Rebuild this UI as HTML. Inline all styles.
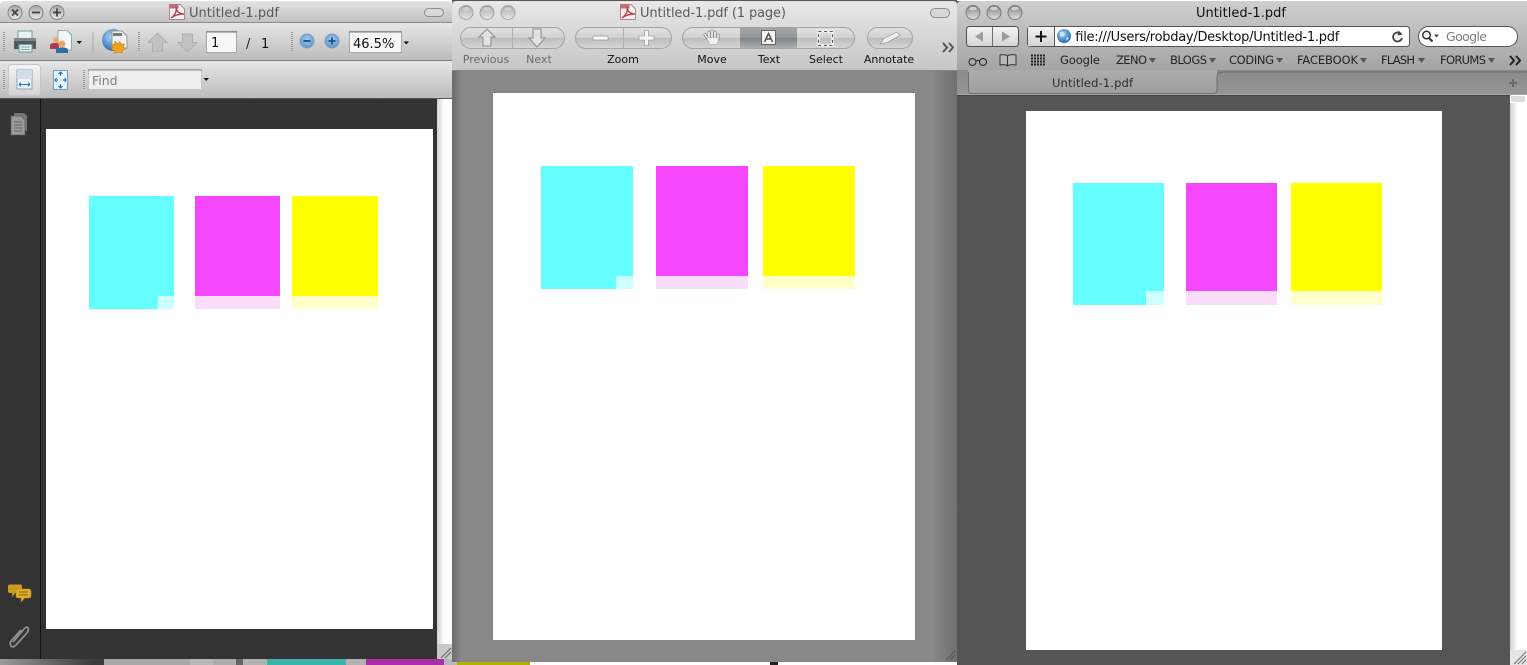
<!DOCTYPE html>
<html><head><meta charset="utf-8"><title>Untitled-1.pdf</title>
<style>
html,body{margin:0;padding:0;background:#fff;width:1527px;height:665px;overflow:hidden}
svg{display:block;position:absolute;left:0;top:0}
text{font-family:"DejaVu Sans","Liberation Sans",sans-serif;dominant-baseline:auto}
</style></head><body>
<svg width="1527" height="665" viewBox="0 0 1527 665" xmlns="http://www.w3.org/2000/svg">
<defs>
<linearGradient id="t1" x1="0" y1="0" x2="0" y2="1"><stop offset="0" stop-color="#e2e2e2"/><stop offset="1" stop-color="#c2c2c2"/></linearGradient>
<linearGradient id="tb1" x1="0" y1="0" x2="0" y2="1"><stop offset="0" stop-color="#e6e6e6"/><stop offset="1" stop-color="#bcbcbc"/></linearGradient>
<linearGradient id="t2" x1="0" y1="0" x2="0" y2="1"><stop offset="0" stop-color="#e8e8e8"/><stop offset="1" stop-color="#c6c6c6"/></linearGradient>
<linearGradient id="t3" x1="0" y1="0" x2="0" y2="1"><stop offset="0" stop-color="#cfcfcf"/><stop offset="1" stop-color="#a4a4a4"/></linearGradient>
<linearGradient id="tab" x1="0" y1="0" x2="0" y2="1"><stop offset="0" stop-color="#ababab"/><stop offset="1" stop-color="#a0a0a0"/></linearGradient>
<linearGradient id="tabbar" x1="0" y1="0" x2="0" y2="1"><stop offset="0" stop-color="#8a8a8a"/><stop offset="1" stop-color="#959595"/></linearGradient>
<linearGradient id="pill" x1="0" y1="0" x2="0" y2="1"><stop offset="0" stop-color="#e2e2e2"/><stop offset=".48" stop-color="#d2d2d2"/><stop offset=".5" stop-color="#bdbdbd"/><stop offset="1" stop-color="#d6d6d6"/></linearGradient>
<linearGradient id="sel" x1="0" y1="0" x2="0" y2="1"><stop offset="0" stop-color="#a2a6a9"/><stop offset=".48" stop-color="#94989c"/><stop offset=".5" stop-color="#7e8388"/><stop offset="1" stop-color="#aab0b4"/></linearGradient>
<linearGradient id="btn" x1="0" y1="0" x2="0" y2="1"><stop offset="0" stop-color="#f4f4f4"/><stop offset="1" stop-color="#d4d4d4"/></linearGradient>
<linearGradient id="sb" x1="0" y1="0" x2="1" y2="0"><stop offset="0" stop-color="#d0d0d0"/><stop offset=".45" stop-color="#fff"/><stop offset="1" stop-color="#fff"/></linearGradient>
<linearGradient id="side" gradientUnits="userSpaceOnUse" x1="452" y1="0" x2="957" y2="0"><stop offset="0" stop-color="#6a6a6a"/><stop offset=".018" stop-color="#888"/><stop offset=".95" stop-color="#888"/><stop offset="1" stop-color="#707070"/></linearGradient>
<linearGradient id="strip" x1="0" y1="0" x2="1" y2="0"><stop offset="0" stop-color="#9a9a9a"/><stop offset="1" stop-color="#3c3c3c"/></linearGradient>
<linearGradient id="l2" x1="0" y1="0" x2="0" y2="1"><stop offset="0" stop-color="#a8a8a8"/><stop offset="1" stop-color="#e8e8e8"/></linearGradient>
<linearGradient id="l3" x1="0" y1="0" x2="0" y2="1"><stop offset="0" stop-color="#7e8082"/><stop offset="1" stop-color="#e0e2e4"/></linearGradient>
<radialGradient id="globe" cx=".4" cy=".35" r=".7"><stop offset="0" stop-color="#a9d4f5"/><stop offset="1" stop-color="#1b62b0"/></radialGradient>
<radialGradient id="zb" cx=".5" cy=".4" r=".6"><stop offset="0" stop-color="#a8cdec"/><stop offset="1" stop-color="#5a94c8"/></radialGradient>
<g id="pdf"><path d="M.5.5H11L15.500 5V15.500H.5Z" fill="#f4f0f0" stroke="#a88"/><rect x=".5" y=".5" width="9" height="4" fill="#c46a72"/><path d="M2 14C6 11 8 7 7 3 7.500 8 11 10 15 10 10 10 6 11 2 14Z" fill="none" stroke="#b23a44" stroke-width="1.300"/></g>
<g id="p2"><circle r="7" fill="url(#l2)" stroke="#a2a2a2"/><ellipse cy="-3.500" rx="3.500" ry="1.800" fill="#dcdcdc" opacity=".7"/></g>
<g id="p3"><circle r="7" fill="url(#l3)" stroke="#7a7a7a"/><ellipse cy="-4" rx="3.800" ry="1.800" fill="#e4e4e4" opacity=".75"/></g>
<g id="dots"><path d="M0 0V20" stroke="#8a8a8a" stroke-width="1.500" stroke-dasharray="1 1"/></g>
</defs>

<!-- backdrop -->
<rect width="1527" height="665" fill="#fff"/>
<rect x="0" y="659" width="92" height="6" fill="url(#strip)"/>
<rect x="92" y="659" width="12" height="6" fill="#3a3a3a"/>
<rect x="104" y="659" width="86" height="6" fill="#a8a8a8"/>
<rect x="190" y="659" width="23" height="6" fill="#b8b8b8"/>
<rect x="213" y="659" width="23" height="6" fill="#adadad"/>
<rect x="236" y="659" width="7" height="6" fill="#666"/>
<rect x="243" y="659" width="24" height="6" fill="#b2b2b2"/>
<rect x="267" y="659" width="79" height="6" fill="#3fb3aa"/>
<rect x="346" y="659" width="20" height="6" fill="#b2b2b2"/>
<rect x="366" y="659" width="78" height="6" fill="#a92fa9"/>
<rect x="444" y="659" width="13" height="6" fill="#b8b8b8"/>
<rect x="457" y="662" width="73" height="3" fill="#b1b000"/>
<rect x="770" y="661" width="8" height="4" fill="#222"/>
<rect x="452" y="0" width="505" height="1" fill="#555"/>

<!-- WINDOW 2 -->
<rect x="452" y="1" width="505" height="661" fill="url(#side)"/>
<path d="M452 70V5Q452 1 457 1H952Q957 1 957 5V70Z" fill="url(#t2)"/>
<rect x="452" y="70" width="505" height="1" fill="#858585"/>
<use href="#p2" x="466" y="12.500"/><use href="#p2" x="487" y="12.500"/><use href="#p2" x="508" y="12.500"/>
<use href="#pdf" x="620" y="4"/>
<text x="640" y="17" font-size="13" fill="#5a5a5a" textLength="146">Untitled-1.pdf (1 page)</text>
<rect x="930.500" y="8.500" width="19" height="9" rx="4.500" fill="#d8d8d8" stroke="#8e8e8e"/>
<!-- pills -->
<rect x="460.500" y="27.500" width="104" height="21" rx="10.500" fill="url(#pill)" stroke="#a4a4a4"/>
<path d="M512.500 28V48" stroke="#aeaeae"/>
<path d="M487 29L495 37H491V46H483V37H479Z" fill="#e2e2e2" stroke="#8c8c8c"/>
<path d="M533 29H541V38H545L537 47 529 38H533Z" fill="#e2e2e2" stroke="#8c8c8c"/>
<rect x="575.500" y="27.500" width="96" height="21" rx="10.500" fill="url(#pill)" stroke="#a4a4a4"/>
<path d="M623.500 28V48" stroke="#aeaeae"/>
<rect x="593" y="36" width="15" height="4" fill="#f4f4f4" stroke="#888" stroke-width=".6"/>
<path d="M644.500 30.500H648.500V36H654V40H648.500V45.500H644.500V40H639V36H644.500Z" fill="#f6f6f6" stroke="#888" stroke-width=".6"/>
<rect x="682.500" y="27.500" width="172" height="21" rx="10.500" fill="url(#pill)" stroke="#a4a4a4"/>
<rect x="740" y="28" width="57" height="20" fill="url(#sel)"/>
<!-- hand -->
<path d="M707.500 38L705 34.500M709 38V32M712 38V31M715 38V32M718 39V35" stroke="#777" stroke-width="2.800" stroke-linecap="round" fill="none"/>
<path d="M707.500 38L705 34.500M709 38V32M712 38V31M715 38V32M718 39V35" stroke="#f6f6f6" stroke-width="1.700" stroke-linecap="round" fill="none"/>
<path d="M706.500 37.500H719L718 42 716 44.500H710Z" fill="#f2f2f2" stroke="#999" stroke-width=".5"/>
<rect x="761.500" y="30.500" width="14" height="14" fill="#f4f4f4" stroke="#666"/>
<path d="M764.500 42L768.500 33.500 772.500 42M766 39H771" fill="none" stroke="#555" stroke-width="1.500"/>
<rect x="818.500" y="31.500" width="14" height="14" fill="none" stroke="#fff" stroke-width="2"/>
<rect x="818.500" y="31.500" width="14" height="14" fill="none" stroke="#555" stroke-dasharray="3 2.600"/>
<rect x="867.500" y="27.500" width="45" height="21" rx="10.500" fill="url(#pill)" stroke="#a4a4a4"/>
<path d="M880 44L884 38.500 897 32 900 35.500 887 42.500Z" fill="#f0f0f0" stroke="#999" stroke-width=".7"/>
<path d="M943 43L947 47.500 943 52M949 43L953 47.500 949 52" fill="none" stroke="#555" stroke-width="2"/>
<g font-size="11" text-anchor="middle">
<text x="486" y="63" fill="#6a6a6a">Previous</text>
<text x="539" y="63" fill="#6a6a6a">Next</text>
<text x="623" y="63" fill="#111">Zoom</text>
<text x="712" y="63" fill="#111">Move</text>
<text x="769" y="63" fill="#111">Text</text>
<text x="826" y="63" fill="#111">Select</text>
<text x="889" y="63" fill="#111">Annotate</text>
</g>
<!-- page 2 -->
<rect x="493" y="93" width="422" height="547" fill="#fff"/>
<rect x="541" y="166" width="92" height="123" fill="#66ffff"/>
<rect x="616" y="276" width="17" height="13" fill="#ccffff"/>
<rect x="656" y="166" width="92" height="110" fill="#f547ff"/>
<rect x="656" y="276" width="92" height="13" fill="#fadcfb"/>
<rect x="763" y="166" width="92" height="110" fill="#ffff00"/>
<rect x="763" y="276" width="92" height="13" fill="#ffffcc"/>
<path d="M946 660L955 651M950 660L955 655" stroke="#555"/>

<!-- WINDOW 1 -->
<rect x="0" y="98" width="452" height="561" fill="#333"/>
<path d="M0 22V5Q0 1 5 1H447Q452 1 452 5V22Z" fill="url(#t1)"/>
<rect x="0" y="22" width="452" height="1" fill="#8a8a8a"/>
<rect x="0" y="23" width="452" height="37" fill="url(#tb1)"/>
<rect x="0" y="60" width="452" height="1" fill="#7c7c7c"/>
<rect x="0" y="61" width="452" height="37" fill="url(#tb1)"/>
<rect x="0" y="98" width="452" height="1" fill="#555"/>
<rect x="437" y="99" width="15" height="560" fill="url(#sb)"/>
<rect x="437" y="644" width="15" height="15" fill="#c8c8c8"/>
<path d="M441 658L451 648M445 658L451 652" stroke="#666"/>
<rect x="40" y="99" width="1" height="560" fill="#111"/>
<g>
<circle cx="15" cy="12.500" r="7" fill="url(#l2)" stroke="#808080"/><path d="M12 9.500L18 15.500M18 9.500L12 15.500" stroke="#444" stroke-width="1.800"/>
<circle cx="36" cy="12.500" r="7" fill="url(#l2)" stroke="#808080"/><path d="M32 12.500H40" stroke="#444" stroke-width="1.800"/>
<circle cx="57" cy="12.500" r="7" fill="url(#l2)" stroke="#808080"/><path d="M53 12.500H61M57 8.500V16.500" stroke="#444" stroke-width="1.800"/>
</g>
<use href="#pdf" x="169" y="4"/>
<text x="189" y="17" font-size="13" fill="#5a5a5a" textLength="90">Untitled-1.pdf</text>
<rect x="424.500" y="8.500" width="19" height="8" rx="4" fill="#d8d8d8" stroke="#8e8e8e"/>
<!-- toolbar 1 -->
<use href="#dots" x="4" y="32"/>
<rect x="18" y="31" width="14" height="8" fill="#e8f2f4" stroke="#7b9aa0"/>
<path d="M14 38H36V49H14Z" fill="#55595c"/><rect x="14" y="38" width="22" height="3" fill="#80868a"/>
<rect x="19" y="44.500" width="13" height="7.500" fill="#dfecf0" stroke="#6f98a8"/>
<path d="M21 47H30M21 49.500H30" stroke="#8aa"/>
<path d="M58 30.500H67L71.500 35V50H58Z" fill="#f2f6fa" stroke="#8aa"/>
<circle cx="56" cy="40" r="3" fill="#e8a868"/><path d="M50 49V45Q50 43 56 43 59 43 59 45V49Z" fill="#b03a54"/>
<circle cx="62" cy="44" r="3.500" fill="#e8a868"/><path d="M56 53V50Q56 47.500 62 47.500 68 47.500 68 50V53Z" fill="#2e6ea8"/>
<path d="M76.500 41H82L79.250 44Z" fill="#111"/>
<path d="M93 32V53" stroke="#a8a8a8"/>
<circle cx="113" cy="40" r="11" fill="url(#globe)"/>
<path d="M112 31H122L127 36V48H112Z" fill="#f2f2f2" stroke="#999"/><rect x="113" y="33" width="9" height="3" fill="#777"/>
<path d="M115 41L117.500 43.500 120 41.500 121 44 124.500 44 123.500 47 125.500 49 122.500 50 122 53 119 52 115 53.500 114.500 50.500 111 49.500 113 47 111 44.500 114.500 44.500Z" fill="#f2a11c" stroke="#b87410" stroke-width=".5"/>
<use href="#dots" x="139" y="32"/>
<path d="M157.500 33L167 42.500H162.500V51H152.500V42.500H148Z" fill="#c2c2c2" stroke="#b0b0b0"/>
<path d="M182.500 34H192.500V42.500H197L187.500 52 178 42.500H182.500Z" fill="#c2c2c2" stroke="#b0b0b0"/>
<rect x="206.500" y="31.500" width="30" height="21" fill="#f7f7f7" stroke="#a6a6a6"/><path d="M206 32H237" stroke="#777"/>
<text x="211" y="47" font-size="13" fill="#111">1</text>
<text x="246" y="48" font-size="13" fill="#222">/</text>
<text x="261" y="48" font-size="13" fill="#111">1</text>
<use href="#dots" x="292" y="32"/>
<circle cx="307" cy="41" r="7" fill="url(#zb)" stroke="#7fa0bc"/><path d="M303.500 41H310.500" stroke="#11508f" stroke-width="1.800"/>
<circle cx="332" cy="41" r="7" fill="url(#zb)" stroke="#7fa0bc"/><path d="M328.500 41H335.500M332 37.500V44.500" stroke="#11508f" stroke-width="1.800"/>
<rect x="349.500" y="31.500" width="52" height="21" fill="#f7f7f7" stroke="#a6a6a6"/><path d="M349 32H402" stroke="#777"/>
<text x="353" y="48" font-size="13" fill="#111">46.5%</text>
<path d="M403.500 41.500H409L406.250 44.500Z" fill="#111"/>
<!-- toolbar 2 -->
<use href="#dots" x="4" y="70"/>
<rect x="8.500" y="64.500" width="32" height="31" rx="3" fill="url(#btn)" stroke="#c6c6c6"/>
<rect x="17" y="70" width="15" height="19" fill="#eef4fa" stroke="#7da4c8"/>
<rect x="17" y="70" width="15" height="9" fill="#d4dde6"/>
<path d="M19 84.500H30M19 84.500L21 82.500M19 84.500L21 86.500M30 84.500L28 82.500M30 84.500L28 86.500" stroke="#2e72b4" fill="none"/>
<rect x="53.500" y="70.500" width="14" height="19" fill="#e8f2fb" stroke="#6f9cc6"/>
<path d="M60.500 72V76M58.500 74L60.500 72 62.500 74M60.500 88V84M58.500 86L60.500 88 62.500 86M55 80H58M56.500 78L55 80 56.500 82M66 80H63M64.500 78L66 80 64.500 82" stroke="#1c68ac" fill="none"/>
<use href="#dots" x="84" y="70"/>
<rect x="88.500" y="69.500" width="113" height="20" fill="#efefef" stroke="#c6c6c6"/><path d="M88 70H202" stroke="#8a8a8a"/>
<text x="92" y="85" font-size="12.500" fill="#808080">Find</text>
<path d="M203.500 78H209L206.250 81Z" fill="#111"/>
<!-- sidebar -->
<path d="M14 113H24L27 116V131H14Z" fill="#777" />
<path d="M11 116H21L25 120V135H11Z" fill="#9a9a9a" stroke="#5a5a5a" stroke-width=".7"/>
<path d="M14 122H22M14 125H22M14 128H22M14 131H22" stroke="#666"/>
<path d="M10 584.500H20Q22 584.500 22 586V591Q22 593 20 593H15L12.500 597.500 12 593H10Q8 593 8 591V586Q8 584.500 10 584.500Z" fill="#c99b1e"/>
<path d="M18 589H29Q31 589 31 591V596Q31 598 29 598H24.500L21.500 602 21 598H18Q16 598 16 596V591Q16 589 18 589Z" fill="#dfae2c" stroke="#b98a14" stroke-width=".5"/>
<path d="M19 592H28M19 595H28" stroke="#8a6206"/>
<path d="M13 642L24 629Q27 626 28 628 29.500 630 26 634L16 645Q13 648 11 646 9 643 12 640L21 630" fill="none" stroke="#8e8e8e" stroke-width="1.800"/>
<!-- page 1 -->
<rect x="46" y="129" width="387" height="500" fill="#fff"/>
<rect x="89" y="196" width="85" height="113" fill="#66ffff"/>
<rect x="158" y="296" width="16" height="13" fill="#ccffff"/>
<rect x="195" y="196" width="85" height="100" fill="#f547ff"/>
<rect x="195" y="296" width="85" height="13" fill="#fadcfb"/>
<rect x="292" y="196" width="86" height="100" fill="#ffff00"/>
<rect x="292" y="296" width="86" height="13" fill="#ffffcc"/>

<!-- WINDOW 3 -->
<rect x="957" y="1" width="570" height="664" fill="#555"/>
<path d="M957 70V5Q957 1 962 1H1527V70Z" fill="url(#t3)"/>
<rect x="957" y="70" width="570" height="24" fill="url(#tabbar)"/>
<path d="M968 70H1217V93H968Z" fill="url(#tab)"/>
<path d="M968.500 72V90Q968.500 93.500 972 93.500H1213Q1217 93.500 1217 90V78Q1217 72 1223 72H1527" fill="none" stroke="#6e6e6e"/>
<rect x="957" y="94" width="570" height="1" fill="#a6a6a6"/>
<rect x="957" y="95" width="570" height="1" fill="#444"/>
<rect x="1510" y="95" width="17" height="570" fill="url(#sb)"/>
<rect x="1510.500" y="95.500" width="15" height="7" fill="#dcdcdc" stroke="#fff"/>
<rect x="1510" y="650" width="17" height="15" fill="#e4e4e4"/>
<path d="M1514 664L1526 652M1518 664L1526 656M1522 664L1526 660" stroke="#777"/>
<use href="#p3" x="973" y="12.500"/><use href="#p3" x="994" y="12.500"/><use href="#p3" x="1015" y="12.500"/>
<text x="1196" y="17" font-size="13" fill="#111" textLength="90">Untitled-1.pdf</text>
<!-- nav -->
<rect x="966.500" y="26.500" width="52" height="20" rx="3" fill="url(#btn)" stroke="#4e4e4e"/>
<path d="M992.500 27V46" stroke="#6e6e6e"/>
<path d="M983 31.500L975 36.500 983 41.500Z" fill="#9b9b9b"/>
<path d="M1002 31.500L1010 36.500 1002 41.500Z" fill="#9b9b9b"/>
<rect x="1027.500" y="26.500" width="382" height="20" rx="3" fill="#fff" stroke="#555"/>
<path d="M1028 27H1054.500V46H1028Z" fill="url(#btn)"/>
<path d="M1054.500 27V46" stroke="#555"/>
<path d="M1041 31V42M1035.500 36.500H1046.500" stroke="#111" stroke-width="2"/>
<circle cx="1064" cy="36" r="7" fill="url(#globe)"/>
<path d="M1060 32Q1064 31 1065 34 1063 38 1060 36ZM1066 38L1069 37 1067 41Z" fill="#cfe4f6"/>
<text x="1075" y="41" font-size="13" fill="#111" textLength="264">file:///Users/robday/Desktop/Untitled-1.pdf</text>
<path d="M1401 34A4.500 4.500 0 1 0 1402 38" fill="none" stroke="#444" stroke-width="1.800"/><path d="M1398.500 30.500L1402.500 34.500 1397.500 35.500Z" fill="#444"/>
<rect x="1418.500" y="26.500" width="99" height="20" rx="10" fill="#fff" stroke="#555"/>
<circle cx="1426.500" cy="35" r="3.800" fill="none" stroke="#333" stroke-width="1.500"/><path d="M1429 38L1432.500 41.500" stroke="#333" stroke-width="2"/>
<path d="M1434 34.500H1439L1436.500 37.500Z" fill="#444"/>
<text x="1446" y="41" font-size="12.500" fill="#7e7e7e" textLength="41">Google</text>
<!-- bookmarks -->
<g fill="none" stroke="#222"><circle cx="972.500" cy="62" r="3.500"/><circle cx="983" cy="62" r="3.500"/><path d="M976 61Q977.500 60 979.500 61"/></g>
<path d="M1000 55Q1005 54 1007.500 56 1010 54 1016 55V65Q1010 64 1007.500 66 1005 64 1000 65ZM1007.500 56V66" fill="#b8b8b8" stroke="#333"/>
<g fill="#222"><path d="M1031 55.500H1045M1031 58.500H1045M1031 61.500H1045M1031 64.500H1045" stroke="#222" stroke-width="2" stroke-dasharray="2 1"/></g>
<g font-size="11.500" fill="#222">
<text x="1060" y="64" textLength="40">Google</text>
<text x="1116" y="64" textLength="31">ZENO</text>
<text x="1170" y="64" textLength="37">BLOGS</text>
<text x="1229" y="64" textLength="45">CODING</text>
<text x="1297" y="64" textLength="61">FACEBOOK</text>
<text x="1381" y="64" textLength="34">FLASH</text>
<text x="1440" y="64" textLength="46">FORUMS</text>
</g>
<g fill="#555"><path d="M1149 58H1156L1152.500 63Z"/><path d="M1209 58H1216L1212.500 63Z"/><path d="M1276 58H1283L1279.500 63Z"/><path d="M1360 58H1367L1363.500 63Z"/><path d="M1418 58H1425L1421.500 63Z"/><path d="M1488 58H1495L1491.500 63Z"/></g>
<path d="M1510 56L1514 60.500 1510 65M1516 56L1520 60.500 1516 65" fill="none" stroke="#222" stroke-width="2"/>
<text x="1052" y="87" font-size="11.500" fill="#2c2c2c" textLength="81">Untitled-1.pdf</text>
<path d="M1513 79V87M1509 83H1517" stroke="#6a6a6a" stroke-width="2"/>
<!-- page 3 -->
<rect x="1026" y="111" width="416" height="539" fill="#fff"/>
<rect x="1073" y="183" width="91" height="122" fill="#66ffff"/>
<rect x="1146" y="291" width="18" height="14" fill="#ccffff"/>
<rect x="1186" y="183" width="91" height="108" fill="#f547ff"/>
<rect x="1186" y="291" width="91" height="14" fill="#fadcfb"/>
<rect x="1291" y="183" width="91" height="108" fill="#ffff00"/>
<rect x="1291" y="291" width="91" height="14" fill="#ffffcc"/>
</svg>
</body></html>
